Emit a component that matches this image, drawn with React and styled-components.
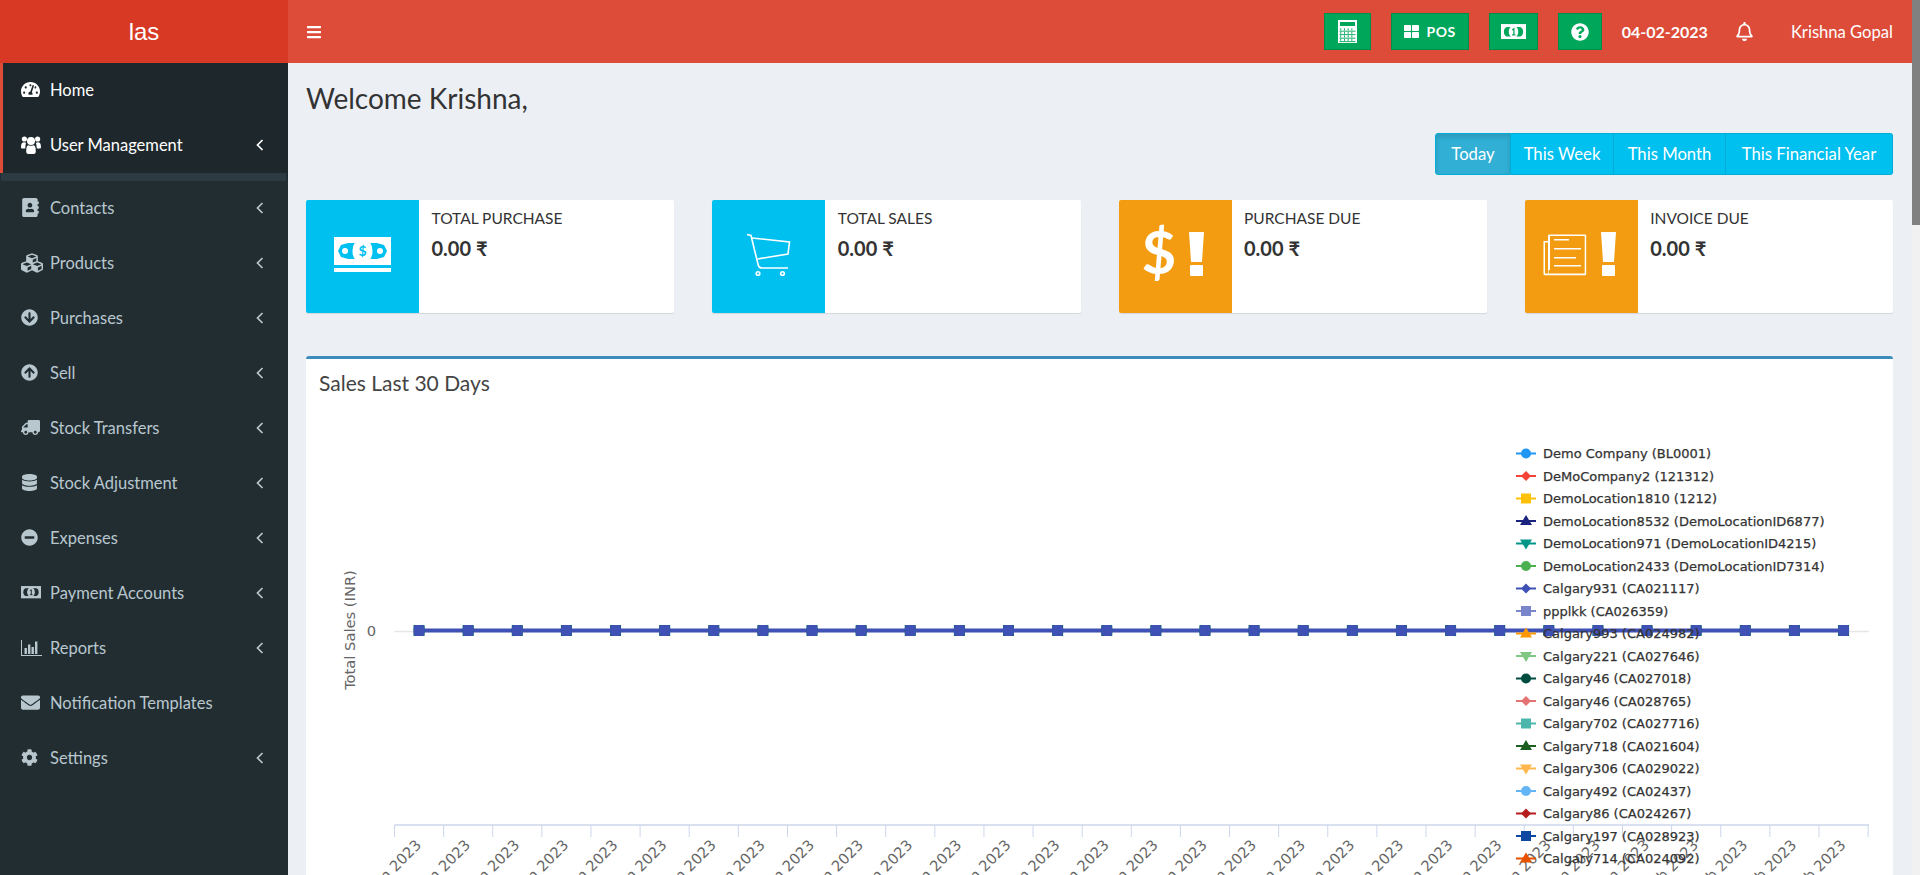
import React from "react"
import styled, { createGlobalStyle } from "styled-components"
import {
  FaAddressBook,
  FaArrowCircleDown,
  FaArrowCircleUp,
  FaBars,
  FaCog,
  FaCubes,
  FaDatabase,
  FaEnvelope,
  FaMinusCircle,
  FaQuestionCircle,
  FaRegBell,
  FaTachometerAlt,
  FaThLarge,
  FaTruck,
} from "react-icons/fa"

const UI_FONT = `"Lato", "Noto Sans", sans-serif`
const CHART_FONT = `"DejaVu Sans", sans-serif`

const GlobalStyle = createGlobalStyle`
  html, body {
    margin: 0;
    height: 100%;
    overflow: hidden;
    background: #ecf0f5;
    font-family: ${UI_FONT};
  }
  * { box-sizing: border-box; }
`

const MoneyIcon = ({ size = 22, note = "currentColor", ink = "#222d32" }) => (
  <svg width={size} height={size * 0.62} viewBox="0 0 26 16">
    <rect x="0" y="0" width="26" height="16" fill={note} />
    <path d="M3 8 C3 5.5 4.2 3.6 6 3 H20 C21.8 3.6 23 5.5 23 8 C23 10.5 21.8 12.4 20 13 H6 C4.2 12.4 3 10.5 3 8 Z" fill={ink} />
    <ellipse cx="13" cy="8" rx="5" ry="6.2" fill={note} />
    <path d="M11.6 6.2 L13.4 4.8 V11.2 M11.6 11.2 H15" stroke={ink} strokeWidth="1.3" fill="none" />
  </svg>
)

const BarChartIcon = () => (
  <svg width="21" height="16" viewBox="0 0 21 16" fill="currentColor">
    <rect x="0" y="0" width="1" height="16" />
    <rect x="0" y="15" width="21" height="1" />
    <rect x="3.5" y="8" width="2.4" height="6" />
    <rect x="7" y="4.5" width="2.4" height="9.5" />
    <rect x="10.5" y="7" width="2.4" height="7" />
    <rect x="14" y="1.5" width="2.4" height="12.5" />
  </svg>
)

const UsersIcon = () => (
  <svg width="20" height="18" viewBox="0 0 20 18" fill="currentColor">
    <circle cx="3.4" cy="3" r="2.6" />
    <circle cx="16.6" cy="3" r="2.6" />
    <path d="M0 11 C0 7.5 1.2 6.2 3.2 6.2 C4 6.2 4.6 6.6 5 7 C4.6 8.5 4.4 10 4.2 12.5 H1.2 C0.5 12.5 0 12 0 11 Z" />
    <path d="M20 11 C20 7.5 18.8 6.2 16.8 6.2 C16 6.2 15.4 6.6 15 7 C15.4 8.5 15.6 10 15.8 12.5 H18.8 C19.5 12.5 20 12 20 11 Z" />
    <circle cx="10" cy="5" r="4" />
    <path d="M5.2 15.5 C5.2 11 6 9 7.8 9.2 C9 10 11 10 12.2 9.2 C14 9 14.8 11 14.8 15.5 C14.8 17 14 18 12.8 18 H7.2 C6 18 5.2 17 5.2 15.5 Z" />
  </svg>
)

const Chevron = () => (
  <svg width="8" height="12" viewBox="0 0 8 12" fill="none" stroke="currentColor" strokeWidth="1.7">
    <path d="M6.5 1 L1.5 6 L6.5 11" />
  </svg>
)

const CalculatorIcon = () => (
  <svg width="19" height="23" viewBox="0 0 19 23">
    <rect x="0" y="0" width="19" height="23" fill="#fff" />
    <rect x="2" y="2" width="15" height="4" fill="#00a65a" />
    {[0, 1, 2, 3].map((row) =>
      [0, 1, 2, 3].map((col) => (
        <rect key={`${row}-${col}`} x={2.3 + col * 3.7} y={8.3 + row * 3.5} width="0.9" height="2.1" fill="#00a65a" />
      ))
    )}
    {[0, 1, 2, 3].map((row) => (
      <rect key={row} x="1.5" y={10.7 + row * 3.5} width="16" height="0.9" fill="#00a65a" />
    ))}
  </svg>
)

const CartIcon = () => (
  <svg width="113" height="113" viewBox="0 0 113 113" fill="none" stroke="#fff" strokeWidth="1.6">
    <path d="M35 34.5 L39 35.5 C41 44 44 56 46 64 C46.5 67 47.5 68 50 68 H76" />
    <path d="M40 38 L77.5 42 L76 54 L45.5 59" />
    <circle cx="46" cy="73.5" r="1.8" />
    <circle cx="70.5" cy="73.5" r="1.8" />
  </svg>
)

const BanknoteIcon = () => (
  <svg width="113" height="113" viewBox="0 0 113 113">
    <rect x="28" y="37" width="57" height="28" fill="#fff" />
    <rect x="28" y="68" width="57" height="4" fill="#fff" />
    <path d="M32 51 L35 45 L42 43 H71 L78 45 L81 51 L78 57 L71 59 H42 L35 57 Z" fill="#00c0ef" />
    <circle cx="39" cy="51" r="3" fill="#fff" />
    <circle cx="74" cy="51" r="3" fill="#fff" />
    <ellipse cx="56.5" cy="51" rx="10" ry="13" fill="#fff" />
    <text x="56.5" y="56" textAnchor="middle" fontFamily={UI_FONT} fontWeight="700" fontSize="14" fill="#00c0ef">$</text>
  </svg>
)

const DueIcon = () => (
  <svg width="113" height="113" viewBox="0 0 113 113" fill="#fff">
    <text x="40" y="74" textAnchor="middle" fontFamily={UI_FONT} fontWeight="700" fontSize="60">$</text>
    <path d="M70 32 H85 L83 62 H72 Z" />
    <rect x="71" y="65" width="13" height="11" rx="1" />
  </svg>
)

const InvoiceIcon = () => (
  <svg width="113" height="113" viewBox="0 0 113 113" fill="#fff">
    <path d="M24 34.5 H60 a1.2 1.2 0 0 1 1.2 1.2 V74 a1.2 1.2 0 0 1 -1.2 1.2 H20 a1.5 1.5 0 0 1 -1.5 -1.5 V41 H23 V42.5 H20 V73.5 H23 V36 a1.5 1.5 0 0 1 1 -1.5 Z M25 36 V70 H23.6 V73.6 H59.7 V36 Z" fillRule="evenodd" />
    <rect x="29" y="39" width="15" height="1.5" />
    <rect x="29" y="48" width="27" height="1.5" />
    <rect x="29" y="57" width="22" height="1.5" />
    <rect x="29" y="65" width="27" height="1.5" />
    <path d="M76 32 H91 L89 62 H78 Z" />
    <rect x="77" y="65" width="13" height="11" rx="1" />
  </svg>
)

const NAV_MAIN = [
  { label: "Home", icon: <FaTachometerAlt size={19} /> },
  { label: "User Management", icon: <UsersIcon />, arrow: true },
]

const NAV_REST = [
  { label: "Contacts", icon: <FaAddressBook size={19} />, arrow: true },
  { label: "Products", icon: <FaCubes size={22} />, arrow: true },
  { label: "Purchases", icon: <FaArrowCircleDown size={17} />, arrow: true },
  { label: "Sell", icon: <FaArrowCircleUp size={17} />, arrow: true },
  { label: "Stock Transfers", icon: <FaTruck size={19} style={{ transform: "scaleX(-1)" }} />, arrow: true },
  { label: "Stock Adjustment", icon: <FaDatabase size={17} />, arrow: true },
  { label: "Expenses", icon: <FaMinusCircle size={17} />, arrow: true },
  { label: "Payment Accounts", icon: <MoneyIcon size={20} />, arrow: true },
  { label: "Reports", icon: <BarChartIcon />, arrow: true },
  { label: "Notification Templates", icon: <FaEnvelope size={19} /> },
  { label: "Settings", icon: <FaCog size={17} />, arrow: true },
]

const TILES = [
  { title: "TOTAL PURCHASE", color: "#00c0ef", icon: <BanknoteIcon /> },
  { title: "TOTAL SALES", color: "#00c0ef", icon: <CartIcon /> },
  { title: "PURCHASE DUE", color: "#f39c12", icon: <DueIcon /> },
  { title: "INVOICE DUE", color: "#f39c12", icon: <InvoiceIcon /> },
]

const RANGES = [
  { label: "Today", width: 76, active: true },
  { label: "This Week", width: 103 },
  { label: "This Month", width: 112 },
  { label: "This Financial Year", width: 167 },
]

const LEGEND = [
  ["Demo Company (BL0001)", "#2196f3", "circle"],
  ["DeMoCompany2 (121312)", "#f44336", "diamond"],
  ["DemoLocation1810 (1212)", "#ffc107", "square"],
  ["DemoLocation8532 (DemoLocationID6877)", "#1a237e", "triangle"],
  ["DemoLocation971 (DemoLocationID4215)", "#009688", "down"],
  ["DemoLocation2433 (DemoLocationID7314)", "#4caf50", "circle"],
  ["Calgary931 (CA021117)", "#3f51b5", "diamond"],
  ["ppplkk (CA026359)", "#7986cb", "square"],
  ["Calgary993 (CA024982)", "#ff9800", "triangle"],
  ["Calgary221 (CA027646)", "#81c784", "down"],
  ["Calgary46 (CA027018)", "#004d40", "circle"],
  ["Calgary46 (CA028765)", "#e57373", "diamond"],
  ["Calgary702 (CA027716)", "#4db6ac", "square"],
  ["Calgary718 (CA021604)", "#1b5e20", "triangle"],
  ["Calgary306 (CA029022)", "#ffb74d", "down"],
  ["Calgary492 (CA02437)", "#64b5f6", "circle"],
  ["Calgary86 (CA024267)", "#b71c1c", "diamond"],
  ["Calgary197 (CA028923)", "#0d47a1", "square"],
  ["Calgary714 (CA024092)", "#e65100", "triangle"],
]

// 30 days ending on the date shown in the header
const DAYS = Array.from({ length: 30 }, (_, i) => {
  const day = i + 6
  return day <= 31
    ? `${String(day).padStart(2, "0")} Jan 2023`
    : `${String(day - 31).padStart(2, "0")} Feb 2023`
})

const PLOT_LEFT = 394.5
const STEP = 49.12
const ZERO_Y = 630.5
const AXIS_Y = 825

const Marker = ({ kind, x, y, color }) => {
  if (kind === "circle") return <circle cx={x} cy={y} r="5" fill={color} />
  if (kind === "square") return <rect x={x - 5} y={y - 5} width="10" height="10" fill={color} />
  if (kind === "diamond") return <path d={`M${x} ${y - 5} L${x + 5} ${y} L${x} ${y + 5} L${x - 5} ${y} Z`} fill={color} />
  if (kind === "triangle") return <path d={`M${x} ${y - 6} L${x + 6} ${y + 4} H${x - 6} Z`} fill={color} />
  return <path d={`M${x} ${y + 6} L${x + 6} ${y - 4} H${x - 6} Z`} fill={color} />
}

const SalesChart = () => (
  <ChartSvg viewBox="306 412 1587 520">
    <line x1={PLOT_LEFT} y1={ZERO_Y + 1} x2="1869" y2={ZERO_Y + 1} stroke="#e6e6e6" strokeWidth="1.5" />
    <AxisText transform="translate(355 630) rotate(-90)" textAnchor="middle">Total Sales (INR)</AxisText>
    <AxisText x="376" y="636" textAnchor="end">0</AxisText>

    <line x1={PLOT_LEFT} y1={AXIS_Y} x2="1869" y2={AXIS_Y} stroke="#ccd6eb" strokeWidth="1.5" />
    {Array.from({ length: 31 }, (_, i) => (
      <line key={i} x1={PLOT_LEFT + i * STEP} y1={AXIS_Y} x2={PLOT_LEFT + i * STEP} y2={AXIS_Y + 12} stroke="#ccd6eb" />
    ))}
    {DAYS.map((day, i) => {
      const x = PLOT_LEFT + STEP * (i + 0.5) + 3
      return (
        <AxisText key={i} transform={`translate(${x} 846) rotate(-45)`} textAnchor="end">
          {day}
        </AxisText>
      )
    })}

    <line x1={PLOT_LEFT + STEP / 2} y1={ZERO_Y} x2={PLOT_LEFT + STEP * 29.5} y2={ZERO_Y} stroke="#3f51b5" strokeWidth="4" />
    {DAYS.map((day, i) => {
      const x = PLOT_LEFT + STEP * (i + 0.5)
      return (
        <g key={day}>
          <rect x={x - 5.5} y={ZERO_Y - 5.5} width="11" height="11" fill="#00695c" />
          <rect x={x - 5.5} y={ZERO_Y - 5.5} width="11" height="11" rx="3" fill="#3f51b5" />
        </g>
      )
    })}

    {LEGEND.map(([label, color, kind], i) => {
      const y = 453.5 + i * 22.5
      return (
        <g key={label + i}>
          <line x1="1516" y1={y} x2="1536" y2={y} stroke={color} strokeWidth="2" />
          <Marker kind={kind} x={1526} y={y} color={color} />
          <LegendText x="1543" y={y + 4.5}>{label}</LegendText>
        </g>
      )
    })}
  </ChartSvg>
)

const NavRow = ({ item, active }) => (
  <NavItem $active={active}>
    <NavIcon>{item.icon}</NavIcon>
    <NavLabel>{item.label}</NavLabel>
    {item.arrow && <Chevron />}
  </NavItem>
)

const App = () => (
  <Page>
    <GlobalStyle />
    <Sidebar>
      <Logo>las</Logo>
      <ActiveGroup>
        {NAV_MAIN.map((item) => (
          <NavRow key={item.label} item={item} active />
        ))}
      </ActiveGroup>
      <TreeStrip />
      {NAV_REST.map((item) => (
        <NavRow key={item.label} item={item} />
      ))}
    </Sidebar>

    <Main>
      <TopBar>
        <FaBars size={16} />
        <TopActions>
          <GreenButton $width={47}><CalculatorIcon /></GreenButton>
          <GreenButton $width={78}>
            <FaThLarge size={15} />
            <PosLabel>POS</PosLabel>
          </GreenButton>
          <GreenButton $width={49}><MoneyIcon size={25} note="#fff" ink="#00a65a" /></GreenButton>
          <GreenButton $width={44}><FaQuestionCircle size={18} /></GreenButton>
          <DateLabel>04-02-2023</DateLabel>
          <BellSlot><FaRegBell size={19} /></BellSlot>
          <UserName>Krishna Gopal</UserName>
        </TopActions>
      </TopBar>

      <Content>
        <Welcome>Welcome Krishna,</Welcome>
        <RangeRow>
          <RangeGroup>
            {RANGES.map((range) => (
              <RangeButton key={range.label} $active={range.active} $width={range.width}>
                {range.label}
              </RangeButton>
            ))}
          </RangeGroup>
        </RangeRow>

        <TileGrid>
          {TILES.map((tile) => (
            <Tile key={tile.title}>
              <TileIcon $color={tile.color}>{tile.icon}</TileIcon>
              <TileBody>
                <TileTitle>{tile.title}</TileTitle>
                <TileValue>0.00 ₹</TileValue>
              </TileBody>
            </Tile>
          ))}
        </TileGrid>

        <ChartBox>
          <ChartTitle>Sales Last 30 Days</ChartTitle>
          <SalesChart />
        </ChartBox>
      </Content>
    </Main>

    <ScrollTrack>
      <ScrollThumb />
    </ScrollTrack>
  </Page>
)

export default App

const Page = styled.div`
  display: flex;
  height: 875px;
  overflow: hidden;
`
const Sidebar = styled.aside`
  flex: 0 0 288px;
  background: #222d32;
`
const Logo = styled.div`
  height: 63px;
  background: #d73925;
  color: #fff;
  font-family: "Liberation Sans", Arial, sans-serif;
  font-size: 24px;
  line-height: 63px;
  text-align: center;
`
const ActiveGroup = styled.div`
  height: 110px;
  background: #1e282c;
  border-left: 3px solid #dd4b39;
`
const TreeStrip = styled.div`
  height: 8px;
  margin: 0 2px 0 1px;
  background: #2c3b41;
`
const NavItem = styled.div`
  display: flex;
  align-items: center;
  height: 55px;
  padding: 0 24px 2px ${({ $active }) => ($active ? "18px" : "21px")};
  color: ${({ $active }) => ($active ? "#fff" : "#b8c7ce")};
`
const NavIcon = styled.span`
  display: flex;
  align-items: center;
  flex: 0 0 29px;
`
const NavLabel = styled.span`
  flex: 1;
  font-size: 16.5px;
`
const Main = styled.div`
  flex: 1;
  min-width: 0;
`
const TopBar = styled.header`
  display: flex;
  align-items: center;
  justify-content: space-between;
  height: 63px;
  padding: 0 19px 0 18px;
  background: #dd4b39;
  color: #fff;
`
const TopActions = styled.div`
  display: flex;
  align-items: center;
  gap: 20px;
`
const GreenButton = styled.div`
  display: flex;
  align-items: center;
  justify-content: center;
  gap: 8px;
  width: ${({ $width }) => $width}px;
  height: 37px;
  background: #00a65a;
  border: 1px solid #008d4c;
`
const PosLabel = styled.span`
  font-size: 14px;
  font-weight: 700;
  letter-spacing: 0.5px;
`
const DateLabel = styled.span`
  font-size: 16px;
  font-weight: 700;
`
const BellSlot = styled.span`
  display: flex;
  margin: 0 17px 0 7px;
`
const UserName = styled.span`
  font-size: 16.6px;
`
const Content = styled.main`
  padding: 15px 19px 0 18px;
`
const Welcome = styled.h1`
  margin: 0;
  height: 40px;
  color: #333;
  font-size: 28px;
  font-weight: 400;
  line-height: 40px;
`
const RangeRow = styled.div`
  display: flex;
  justify-content: flex-end;
  margin-top: 15px;
`
const RangeGroup = styled.div`
  display: flex;
  height: 42px;
`
const RangeButton = styled.div`
  width: ${({ $width }) => $width}px;
  border: 1px solid #00acd6;
  border-left-width: ${({ $active }) => ($active ? "1px" : "0")};
  background: ${({ $active }) => ($active ? "#31afd5" : "#00c0ef")};
  box-shadow: ${({ $active }) => ($active ? "inset 0 3px 5px rgba(0, 0, 0, 0.125)" : "none")};
  color: #fff;
  font-size: 16.7px;
  line-height: 40px;
  text-align: center;
  &:first-child {
    border-radius: 3px 0 0 3px;
  }
  &:last-child {
    border-radius: 0 3px 3px 0;
  }
`
const TileGrid = styled.div`
  display: grid;
  grid-template-columns: repeat(4, 1fr);
  column-gap: 38px;
  margin-top: 25px;
`
const Tile = styled.div`
  display: flex;
  height: 113px;
  background: #fff;
  border-radius: 2px;
  box-shadow: 0 1px 1px rgba(0, 0, 0, 0.1);
`
const TileIcon = styled.div`
  display: flex;
  flex: 0 0 113px;
  background: ${({ $color }) => $color};
  border-radius: 2px 0 0 2px;
`
const TileBody = styled.div`
  padding: 7px 12.5px;
  color: #333;
`
const TileTitle = styled.div`
  font-size: 15.5px;
  line-height: 22px;
`
const TileValue = styled.div`
  margin-top: 7px;
  font-size: 20px;
  font-weight: 700;
  line-height: 24px;
`
const ChartBox = styled.section`
  margin-top: 43px;
  height: 600px;
  background: #fff;
  border-top: 3px solid #3c8dbc;
  border-radius: 3px;
`
const ChartTitle = styled.h3`
  margin: 0;
  height: 53px;
  padding: 10px 13px;
  color: #444;
  font-size: 21px;
  font-weight: 400;
  line-height: 28px;
`
const ChartSvg = styled.svg`
  display: block;
  width: 1587px;
  height: 520px;
`
const AxisText = styled.text`
  fill: #666;
  font-family: ${CHART_FONT};
  font-size: 14.7px;
`
const LegendText = styled.text`
  fill: #333;
  font-family: ${CHART_FONT};
  font-size: 13px;
  font-weight: 400;
  stroke: #333;
  stroke-width: 0.25px;
`
const ScrollTrack = styled.div`
  flex: 0 0 8px;
  background: #f1f1f1;
`
const ScrollThumb = styled.div`
  height: 225px;
  background: #808080;
`
